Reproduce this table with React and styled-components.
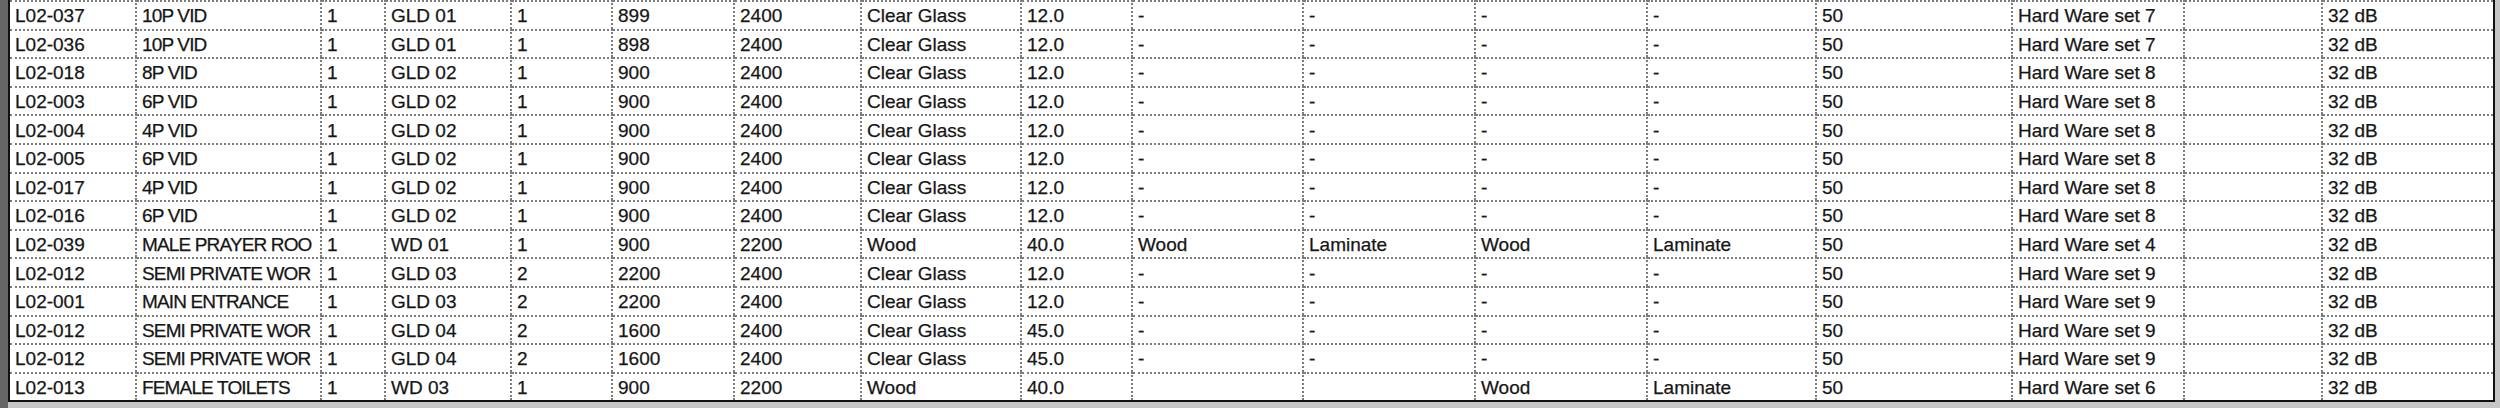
import React from "react";
import styled, { createGlobalStyle } from "styled-components";

const GlobalStyle = createGlobalStyle`
    html, body {
        margin: 0;
        padding: 0;
        background: #c6c6c6;
    }
    #root {
        width: 2500px;
        height: 408px;
        overflow: hidden;
    }
`;

const columns = [127, 185, 64, 126, 101, 122, 127, 160, 111, 171, 172, 172, 169, 196, 172, 138, 170];

const Frame = styled.div`
    height: 408px;
    box-sizing: border-box;
    border-left: 8px solid #666;
    background: #c6c6c6;
    display: flex;
    align-items: flex-start;
`;
const Table = styled.div`
    display: grid;
    grid-template-columns: ${columns.map(w => `${w}px`).join(" ")};
    grid-auto-rows: 28.6px;
    background: #fff;
    border-left: 2px solid #111;
    border-right: 2px solid #111;
    border-bottom: 2px solid #111;
    font-family: "Liberation Sans", Arial, sans-serif;
    font-size: 19px;
    color: #161616;
    -webkit-text-stroke: 0.25px #161616;
`;
const Cell = styled.div`
    box-sizing: border-box;
    display: flex;
    align-items: center;
    padding: 2px 2px 0 5px;
    border-top: 2px dotted #7c7c7c;
    border-right: ${p => (p.$last ? "none" : "2px dotted #7c7c7c")};
    white-space: nowrap;
    overflow: hidden;
    letter-spacing: ${p => (p.$tight ? "-0.85px" : "0")};
`;

const glass = (id, name, type, leaf, width, thick, hw) =>
    [id, name, "1", type, leaf, width, "2400", "Clear Glass", thick, "-", "-", "-", "-", "50", hw, "", "32 dB"];

// names are cut by the column in the schedule, kept as they show
const rows = [
    glass("L02-037", "10P VID", "GLD 01", "1", "899", "12.0", "Hard Ware set 7"),
    glass("L02-036", "10P VID", "GLD 01", "1", "898", "12.0", "Hard Ware set 7"),
    glass("L02-018", "8P VID", "GLD 02", "1", "900", "12.0", "Hard Ware set 8"),
    glass("L02-003", "6P VID", "GLD 02", "1", "900", "12.0", "Hard Ware set 8"),
    glass("L02-004", "4P VID", "GLD 02", "1", "900", "12.0", "Hard Ware set 8"),
    glass("L02-005", "6P VID", "GLD 02", "1", "900", "12.0", "Hard Ware set 8"),
    glass("L02-017", "4P VID", "GLD 02", "1", "900", "12.0", "Hard Ware set 8"),
    glass("L02-016", "6P VID", "GLD 02", "1", "900", "12.0", "Hard Ware set 8"),
    ["L02-039", "MALE PRAYER ROO", "1", "WD 01", "1", "900", "2200", "Wood", "40.0", "Wood", "Laminate", "Wood", "Laminate", "50", "Hard Ware set 4", "", "32 dB"],
    glass("L02-012", "SEMI PRIVATE WOR", "GLD 03", "2", "2200", "12.0", "Hard Ware set 9"),
    glass("L02-001", "MAIN ENTRANCE", "GLD 03", "2", "2200", "12.0", "Hard Ware set 9"),
    glass("L02-012", "SEMI PRIVATE WOR", "GLD 04", "2", "1600", "45.0", "Hard Ware set 9"),
    glass("L02-012", "SEMI PRIVATE WOR", "GLD 04", "2", "1600", "45.0", "Hard Ware set 9"),
    ["L02-013", "FEMALE TOILETS", "1", "WD 03", "1", "900", "2200", "Wood", "40.0", "", "", "Wood", "Laminate", "50", "Hard Ware set 6", "", "32 dB"],
];

export default function App() {
    return <>
        <GlobalStyle />
        <Frame>
            <Table>
                {rows.map((r, i) => r.map((v, c) =>
                    <Cell key={`${i}-${c}`} $last={c === columns.length - 1} $tight={c === 1}>{v}</Cell>
                ))}
            </Table>
        </Frame>
    </>;
}
